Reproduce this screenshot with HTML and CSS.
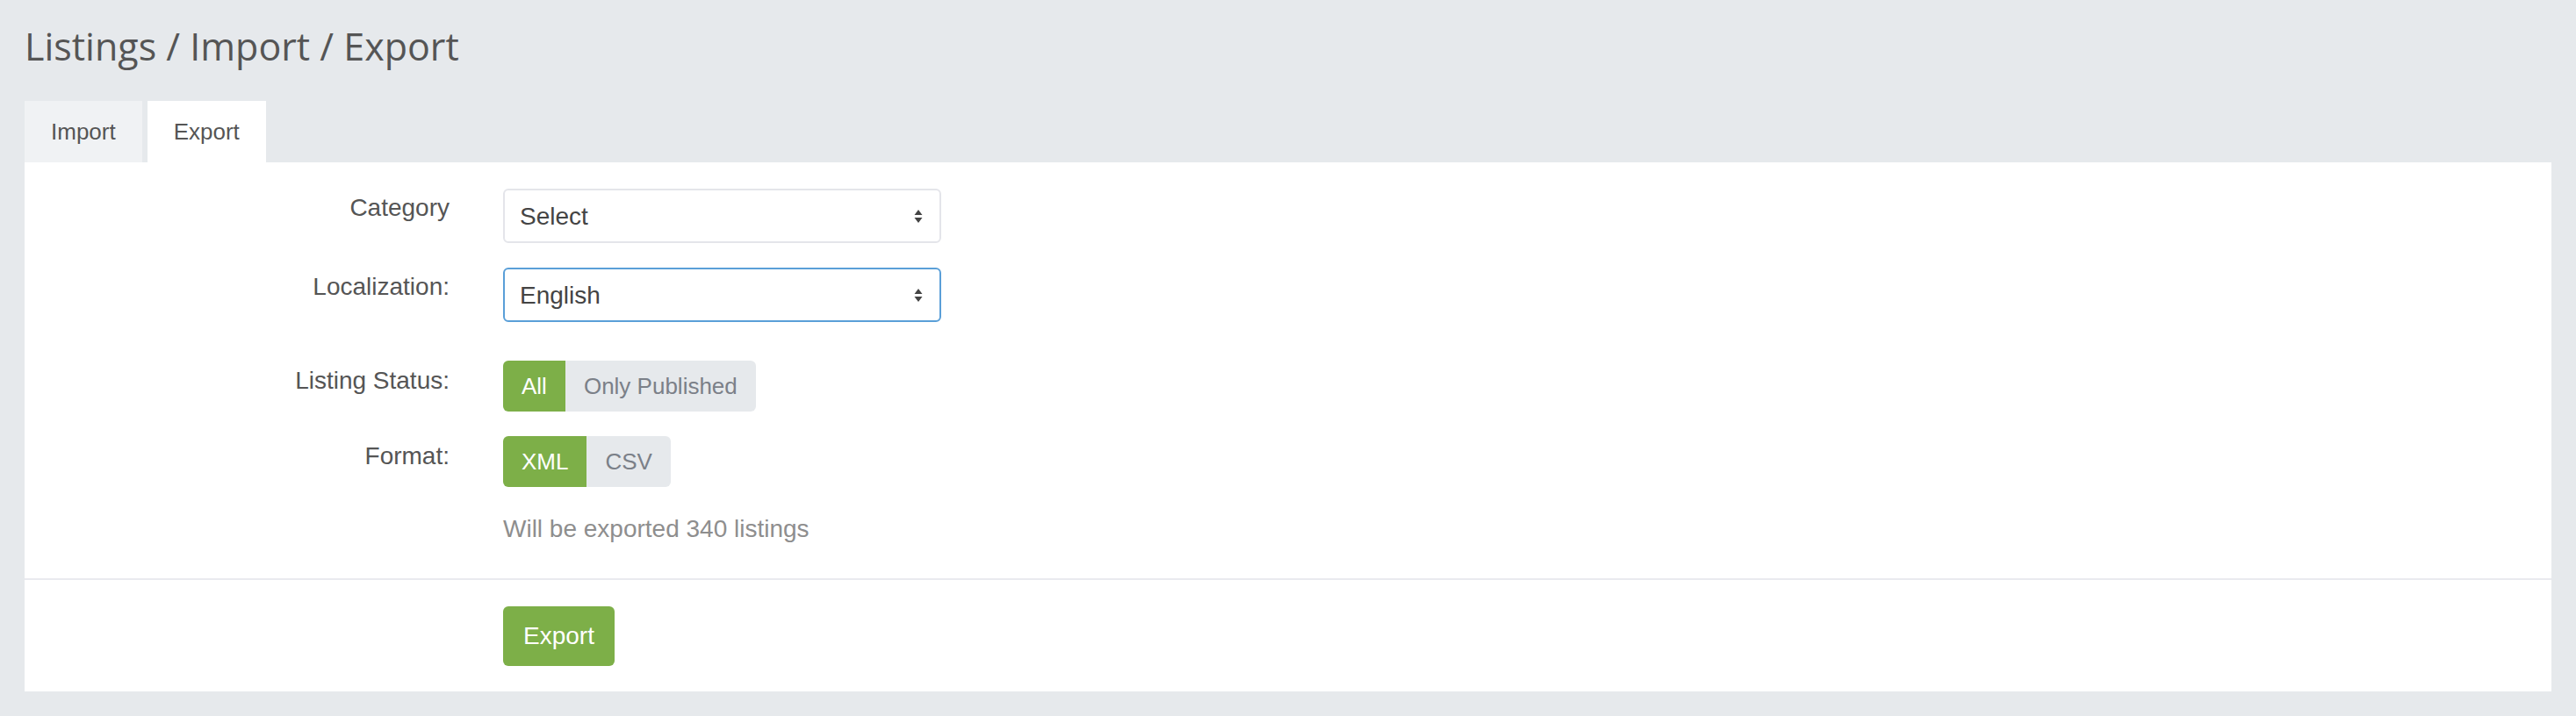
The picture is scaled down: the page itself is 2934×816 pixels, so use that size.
FILE: index.html
```html
<!DOCTYPE html>
<html lang="en">
<head>
    <meta charset="UTF-8">
    <meta name="viewport" content="width=device-width, initial-scale=1.0">
    <title>Listings / Import / Export</title>
    <link rel="stylesheet" href="styles.css">
</head>
<body>
    <div class="page">
        <h1 class="page-title">Listings / Import / Export</h1>

        <ul class="tabs">
            <li class="tab"><a href="#import">Import</a></li>
            <li class="tab active"><a href="#export">Export</a></li>
        </ul>

        <form class="panel">
            <div class="panel-body">
                <div class="form-row">
                    <label class="form-label" for="category">Category</label>
                    <div class="select-wrap">
                        <select id="category" class="form-select">
                            <option>Select</option>
                        </select>
                        <svg class="select-arrow" width="10" height="15" viewBox="0 0 10 15">
                            <path d="M5 0 L9.5 6 L0.5 6 Z M5 15 L9.5 9 L0.5 9 Z" fill="#444"/>
                        </svg>
                    </div>
                </div>

                <div class="form-row form-row-wide">
                    <label class="form-label" for="locale">Localization:</label>
                    <div class="select-wrap">
                        <select id="locale" class="form-select focused">
                            <option>English</option>
                        </select>
                        <svg class="select-arrow" width="10" height="15" viewBox="0 0 10 15">
                            <path d="M5 0 L9.5 6 L0.5 6 Z M5 15 L9.5 9 L0.5 9 Z" fill="#444"/>
                        </svg>
                    </div>
                </div>

                <div class="form-row">
                    <span class="form-label btn-label">Listing Status:</span>
                    <div class="btn-group">
                        <button type="button" class="btn-toggle active">All</button>
                        <button type="button" class="btn-toggle">Only Published</button>
                    </div>
                </div>

                <div class="form-row">
                    <span class="form-label btn-label">Format:</span>
                    <div class="btn-group">
                        <button type="button" class="btn-toggle active">XML</button>
                        <button type="button" class="btn-toggle">CSV</button>
                    </div>
                </div>

                <div class="form-row form-row-last">
                    <span></span>
                    <p class="help-text">Will be exported 340 listings</p>
                </div>
            </div>

            <div class="panel-footer">
                <div class="form-row form-row-last">
                    <span></span>
                    <div><button type="submit" class="btn-export">Export</button></div>
                </div>
            </div>
        </form>
    </div>
</body>
</html>
```

FILE: styles.css
```css
/* Reset */
body, h1, p, ul {
    margin: 0;
    padding: 0;
}

body {
    background-color: #e6e9ec;
    font-family: "Liberation Sans", Arial, sans-serif;
    color: #555;
}

.page {
    padding: 0 28px 28px;
}

.page-title {
    font-family: "Open Sans", sans-serif;
    font-weight: normal;
    font-size: 43px;
    line-height: 56px;
    padding-top: 25px;
    margin-bottom: 34px;
    color: #555;
}

/* Tabs */
.tabs {
    list-style-type: none;
    display: flex;
    gap: 6px;
}

.tab a {
    display: block;
    padding: 15px 30px;
    font-size: 26px;
    line-height: 40px;
    color: #555;
    text-decoration: none;
    background-color: #f0f2f4;
}

.tab.active a {
    background-color: #fff;
}

/* Panel */
.panel {
    background-color: #fff;
}

.panel-body {
    padding: 30px 30px 36px;
}

.panel-footer {
    border-top: 2px solid #e9eaef;
    padding: 30px 30px 29px;
}

.form-row {
    display: grid;
    grid-template-columns: 454px 1fr;
    column-gap: 61px;
    margin-bottom: 28px;
}

.form-row-wide {
    margin-bottom: 44px;
}

.form-row-last {
    margin-bottom: 0;
}

.form-label {
    text-align: right;
    font-size: 28px;
    line-height: 40px;
    padding-top: 2px;
    color: #555;
}

.btn-label {
    padding-top: 3px;
}

/* Select */
.select-wrap {
    position: relative;
    width: 499px;
}

.form-select {
    appearance: none;
    -webkit-appearance: none;
    display: block;
    width: 100%;
    height: 62px;
    padding: 0 17px;
    border: 2px solid #e4e5ea;
    border-radius: 6px;
    background-color: #fff;
    font-family: "Liberation Sans", Arial, sans-serif;
    font-size: 28px;
    color: #444;
    outline: none;
}

.form-select.focused {
    border-color: #5a9fd8;
}

.select-arrow {
    position: absolute;
    right: 21px;
    top: 24px;
}

/* Toggle buttons */
.btn-group {
    display: inline-flex;
    justify-self: start;
    border-radius: 6px;
    overflow: hidden;
}

.btn-toggle {
    height: 58px;
    padding: 0 21px;
    border: none;
    background-color: #e6e9ec;
    color: #7b8088;
    font-family: "Liberation Sans", Arial, sans-serif;
    font-size: 26px;
    line-height: 58px;
    cursor: pointer;
}

.btn-toggle.active {
    background-color: #7daf48;
    color: #fff;
}

.help-text {
    font-size: 28px;
    line-height: 40px;
    color: #8e8e8e;
}

.btn-export {
    height: 68px;
    padding: 0 23px;
    border: none;
    border-radius: 6px;
    background-color: #7daf48;
    color: #fff;
    font-family: "Liberation Sans", Arial, sans-serif;
    font-size: 28px;
    cursor: pointer;
}
```
